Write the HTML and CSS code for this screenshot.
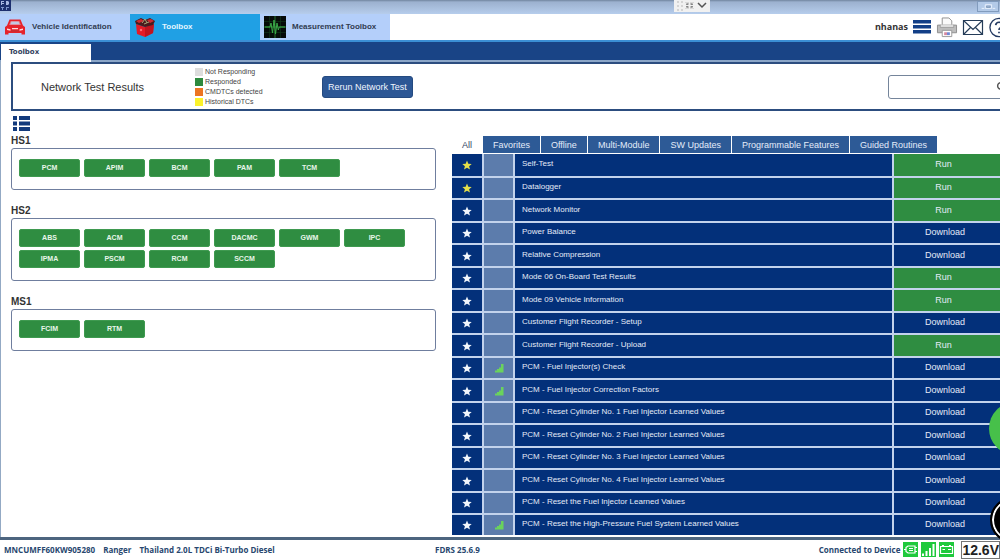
FILE: index.html
```html
<!DOCTYPE html>
<html lang="en">
<head>
<meta charset="utf-8">
<title>FDRS Toolbox</title>
<link rel="stylesheet" href="styles.css">
</head>
<body>
<svg class="defs" aria-hidden="true">
  <symbol id="star" viewBox="0 0 10 10"><path d="M5 .6 6.300 3.800 9.700 4 7.100 6.200 8 9.500 5 7.700 2 9.500 2.900 6.200.3 4l3.400-.2z"/></symbol>
  <symbol id="signal" viewBox="0 0 10 10"><path d="M1 7.500h2V6h2V4.500h2V1h2.500v8.500H1z"/></symbol>
</svg>
<div class="app">
  <div class="titlebar">
    <svg class="app-icon" viewBox="0 0 11 11" aria-hidden="true"><rect width="11" height="11" fill="#1d2f6e"/><path d="M1 1h3v1H2v1h2v1H2v1H1zM6 1h2l1 1v2L8 5H6z" fill="#a9b8e2"/><path d="M1 7h3v1H3v2H2V8H1zM6 7h3v1H7v2H6z" fill="#7d93cd"/></svg>
    <div class="dock">
      <svg viewBox="0 0 36 12" aria-hidden="true"><path d="M3 1h2v2H3zM7 1h2v2H7zM3 5h2v2H3zM7 5h2v2H7zM3 9h2v2H3zM7 9h2v2H7z" fill="#d4d4d4"/><path d="M12 2.500l2 2m0-2v2h-2M19 2.500l-2 2m0-2v2h2M12 8.500l2-2m0 2v-2h-2M19 8.500l-2-2m0 2v-2h2" fill="none" stroke="#777" stroke-width=".8"/><path d="M24 3l4 4 4-4" fill="none" stroke="#555" stroke-width="1.500"/></svg>
    </div>
    <button class="window-button" aria-label="Restore"><svg viewBox="0 0 22 10" aria-hidden="true"><path d="M8 3h7v4H8zM4 7h3M16 7h3" fill="none" stroke="#eef5ff"/><path d="M9.500 4.500h4v1.500h-4z" fill="none" stroke="#6e87a8" stroke-width=".7"/></svg></button>
  </div>

  <header class="topbar">
    <nav class="main-nav">
      <a href="#vehicle">
        <svg viewBox="0 0 22 22" aria-hidden="true"><path d="M5.500 3.500h11l2.500 6 2 1.500v7.500h-3.500V17h-13v1.500H1V11l2-1.500z" fill="#e6232c"/><path d="M6.700 5h8.600l1.500 4H5.200z" fill="#e3808e"/><path d="M7.500 5.800h7l1 2.500h-9z" fill="#c2c8e2"/><path d="M3 12.500l3.500.8v1.500L3 14zM19 12.500l-3.500.8v1.500L19 14zM8 12h6v1.300H8z" fill="#ffd8dc"/><path d="M7 15h8" stroke="#b5323a"/></svg>
        Vehicle Identification</a>
      <a href="#toolbox" class="active" aria-current="page">
        <svg viewBox="0 0 22 22" aria-hidden="true"><path d="M2 8l9 3 9-3-1 9-8 4-8-3z" fill="#e31b27"/><path d="M11 11l9-3-1 9-8 4z" fill="#c1141f"/><path d="M1 5l6-3 4 2 5-2 5 3-2 4-8 2-9-3z" fill="#491b1d"/><path d="M2 5l5-2 3 2-5 2zM13 4l4-1 3 2-4 2z" fill="#cf2a30"/><path d="M8 7l3-4 2 4m-3 1l5-2" stroke="#a8a477" fill="none"/><circle cx="7" cy="14" r="1.200" fill="#ff7078"/></svg>
        Toolbox</a>
      <a href="#measurement">
        <svg viewBox="0 0 22 22" aria-hidden="true"><rect width="22" height="22" fill="#060b08"/><path d="M0 5.500h22M0 16.500h22M5.500 0v22M16.500 0v22" stroke="#123b1b" stroke-width=".6"/><path d="M0 11h22M11 0v22" stroke="#2c8a3a" stroke-width=".8"/><path d="M1 11h5l1-4 1.500 10L10 4l1.500 14L13 7l1.300 7 1-3H21" fill="none" stroke="#3aa847" stroke-width="1"/></svg>
        Measurement Toolbox</a>
    </nav>
    <div class="user-tools">
      <span class="user">nhanas</span>
      <button aria-label="Menu"><svg viewBox="0 0 20 16" aria-hidden="true"><path d="M1 1h18v3.500H1zM1 6h18v3.500H1zM1 11h18v3.500H1z" fill="#123f87"/></svg></button>
      <button aria-label="Print"><svg viewBox="0 0 22 22" aria-hidden="true"><path d="M6 9V1h7l3 3v5" fill="#fafafa" stroke="#909090"/><path d="M1 8.500h20v8H1z" fill="#bdbdbd" stroke="#8e8e8e"/><path d="M4 8v3h14V8" fill="#ddd" stroke="#919191" stroke-width=".7"/><path d="M6 14h10v6.500H6z" fill="#fff" stroke="#999"/><path d="M8 16h3v3H8z" fill="#d68aa0"/><path d="M11 16h3v3h-3z" fill="#6f88d4"/></svg></button>
      <button aria-label="Messages"><svg viewBox="0 0 22 16" aria-hidden="true"><path d="M1.500 1h19v14h-19zM1.500 1l9.500 9 9.500-9M1.500 15l7-7M20.500 15l-7-7" fill="#fff" fill-opacity=".2" stroke="#253c58" stroke-width="1.200"/></svg></button>
      <button aria-label="Help"><svg viewBox="0 0 22 22" aria-hidden="true"><circle cx="11" cy="11" r="9.500" fill="#fff" stroke="#243a62" stroke-width="1.400"/><path d="M7.500 8.500Q8 5.500 11 5.500t3.500 3q0 1.500-2 2.700-1.500.8-1.500 2.300M11 15.500v1.500" fill="none" stroke="#243a62" stroke-width="1.800"/></svg></button>
    </div>
  </header>

  <div class="subbar"><a href="#toolbox" class="subtab">Toolbox</a></div>

  <main class="workspace">
    <section class="results-head">
      <h1>Network Test Results</h1>
      <ul class="legend">
        <li class="none">Not Responding</li>
        <li class="ok">Responded</li>
        <li class="cmdtc">CMDTCs detected</li>
        <li class="history">Historical DTCs</li>
      </ul>
      <button class="rerun">Rerun Network Test</button>
      <div class="search"><input type="search" aria-label="Search"><svg viewBox="0 0 10 10" aria-hidden="true"><path d="M7 7l2.500 2.500M7.500 4.500a3 3 0 1 1-6 0 3 3 0 0 1 6 0z" fill="none" stroke="#555" stroke-width="1.300"/></svg></div>
    </section>

    <div class="columns">
      <div class="networks">
        <button class="list-toggle" aria-label="List view"><svg viewBox="0 0 17 15" aria-hidden="true"><path d="M0 0h4v4H0zM6 0h11v4H6zM0 5.500h4v4H0zM6 5.500h11v4H6zM0 11h4v4H0zM6 11h11v4H6z" fill="#123a7c"/></svg></button>
        <section>
          <h2>HS1</h2>
          <div class="modules"><button>PCM</button><button>APIM</button><button>BCM</button><button>PAM</button><button>TCM</button></div>
        </section>
        <section>
          <h2>HS2</h2>
          <div class="modules"><button>ABS</button><button>ACM</button><button>CCM</button><button>DACMC</button><button>GWM</button><button>IPC</button><button>IPMA</button><button>PSCM</button><button>RCM</button><button>SCCM</button></div>
        </section>
        <section>
          <h2>MS1</h2>
          <div class="modules"><button>FCIM</button><button>RTM</button></div>
        </section>
      </div>

      <section class="tools">
        <div class="filters" role="tablist">
          <button role="tab" aria-selected="true">All</button>
          <button role="tab">Favorites</button>
          <button role="tab">Offline</button>
          <button role="tab">Multi-Module</button>
          <button role="tab">SW Updates</button>
          <button role="tab">Programmable Features</button>
          <button role="tab">Guided Routines</button>
        </div>
        <table>
          <colgroup><col class="col-star"><col class="col-signal"><col><col class="col-action"></colgroup>
          <tbody>
          <tr class="fav"><td><svg><use href="#star"/></svg></td><td></td><td>Self-Test</td><td class="run"><button>Run</button></td></tr>
          <tr class="fav"><td><svg><use href="#star"/></svg></td><td></td><td>Datalogger</td><td class="run"><button>Run</button></td></tr>
          <tr><td><svg><use href="#star"/></svg></td><td></td><td>Network Monitor</td><td class="run"><button>Run</button></td></tr>
          <tr><td><svg><use href="#star"/></svg></td><td></td><td>Power Balance</td><td><button>Download</button></td></tr>
          <tr><td><svg><use href="#star"/></svg></td><td></td><td>Relative Compression</td><td><button>Download</button></td></tr>
          <tr><td><svg><use href="#star"/></svg></td><td></td><td>Mode 06 On-Board Test Results</td><td class="run"><button>Run</button></td></tr>
          <tr><td><svg><use href="#star"/></svg></td><td></td><td>Mode 09 Vehicle Information</td><td class="run"><button>Run</button></td></tr>
          <tr><td><svg><use href="#star"/></svg></td><td></td><td>Customer Flight Recorder - Setup</td><td><button>Download</button></td></tr>
          <tr><td><svg><use href="#star"/></svg></td><td></td><td>Customer Flight Recorder - Upload</td><td class="run"><button>Run</button></td></tr>
          <tr><td><svg><use href="#star"/></svg></td><td><svg><use href="#signal"/></svg></td><td>PCM - Fuel Injector(s) Check</td><td><button>Download</button></td></tr>
          <tr><td><svg><use href="#star"/></svg></td><td><svg><use href="#signal"/></svg></td><td>PCM - Fuel Injector Correction Factors</td><td><button>Download</button></td></tr>
          <tr><td><svg><use href="#star"/></svg></td><td></td><td>PCM - Reset Cylinder No. 1 Fuel Injector Learned Values</td><td><button>Download</button></td></tr>
          <tr><td><svg><use href="#star"/></svg></td><td></td><td>PCM - Reset Cylinder No. 2 Fuel Injector Learned Values</td><td><button>Download</button></td></tr>
          <tr><td><svg><use href="#star"/></svg></td><td></td><td>PCM - Reset Cylinder No. 3 Fuel Injector Learned Values</td><td><button>Download</button></td></tr>
          <tr><td><svg><use href="#star"/></svg></td><td></td><td>PCM - Reset Cylinder No. 4 Fuel Injector Learned Values</td><td><button>Download</button></td></tr>
          <tr><td><svg><use href="#star"/></svg></td><td></td><td>PCM - Reset the Fuel Injector Learned Values</td><td><button>Download</button></td></tr>
          <tr><td><svg><use href="#star"/></svg></td><td><svg><use href="#signal"/></svg></td><td>PCM - Reset the High-Pressure Fuel System Learned Values</td><td><button>Download</button></td></tr>
          </tbody>
        </table>
      </section>
    </div>
  </main>

  <footer class="statusbar">
    <div class="vehicle"><span>MNCUMFF60KW905280</span><span>Ranger</span><span>Thailand 2.0L TDCi Bi-Turbo Diesel</span></div>
    <span class="version">FDRS 25.6.9</span>
    <div class="connection">
      <span>Connected to Device</span>
      <svg viewBox="0 0 15 15" aria-hidden="true"><rect width="15" height="15" fill="#1fc93c"/><path d="M1 7.500h2M3 5.500L5 4h7v7H5L3 9.500zM12 5.500h2M12 9.500h2" fill="none" stroke="#fff" stroke-width="1.200"/><path d="M6 6.500h4M6 8.500h4" stroke="#fff"/></svg>
      <svg viewBox="0 0 15 15" aria-hidden="true"><rect width="15" height="15" fill="#1fc93c"/><path d="M1 11.500h2V14H1zM4.500 9h2v5h-2zM8 6h2v8H8zM11.500 2h2v12h-2z" fill="#fff"/></svg>
      <svg viewBox="0 0 15 15" aria-hidden="true"><rect width="15" height="15" fill="#1fc93c"/><path d="M1.500 4.500h12v7h-12zM3 3.500h2M10 3.500h2M3.500 7.500h2.500M9 7.500h3" fill="none" stroke="#fff" stroke-width="1.200"/></svg>
      <strong>12.6V</strong>
    </div>
  </footer>
  <button class="bubble green" aria-label="Assistant"></button>
  <button class="bubble black" aria-label="Recorder"></button>
</div>
</body>
</html>
```
FILE: styles.css
```css
* { box-sizing: border-box; }
body { margin: 0; background: #fff; color: #333; font: 9px/12px "Liberation Sans", Arial, sans-serif; }
button { font: inherit; color: inherit; margin: 0; padding: 0; border: 0; background: none; cursor: pointer; }
a { color: inherit; text-decoration: none; }
h1, h2, ul { margin: 0; padding: 0; }
svg { display: block; flex: none; }
.defs { display: none; }
.app { position: relative; display: flex; flex-direction: column; height: 100vh; overflow: hidden; }

.titlebar { position: relative; display: flex; flex: none; justify-content: space-between; height: 14px; background: linear-gradient(#71859f, #9cb1cf 2px, #b6cdec); }
.app-icon { width: 11px; height: 11px; }
.dock { position: absolute; left: 67.4%; top: 0; width: 36px; height: 12px; background: #f1f1f1; }
.window-button { width: 22px; height: 11px; margin: 1px 1px 0; border: 1px solid #819bbd; background: #b3cae8; }

.topbar { display: flex; flex: none; justify-content: space-between; height: 28px; border-bottom: 2px solid #3b8fd5; }
.main-nav { display: flex; width: 39%; background: #b4cffa; font: bold 8px/12px "Liberation Sans", Arial, sans-serif; color: #303b50; }
.main-nav a { display: flex; flex: 1; align-items: center; gap: 6px; padding-left: 4px; white-space: nowrap; }
.main-nav svg { width: 22px; height: 22px; }
.main-nav .active { background: #20a0e4; color: #e4f6ff; }
.user-tools { display: flex; align-items: center; gap: 4px; margin-right: -10px; }
.user { font: bold 9px/12px "Open Sans", sans-serif; }
.user-tools svg { width: 22px; height: 21px; }
.user-tools button:first-of-type svg { width: 20px; height: 16px; }

.subbar { display: flex; flex: none; height: 20px; padding: 2px 1px 0; background: #194486; border-bottom: 2px solid #8ba6c8; }
.subtab { display: block; width: 90px; height: 18px; padding: 2px 8px; background: #fff; font: bold 7px/12px "DejaVu Sans", sans-serif; color: #31415d; z-index: 1; }

.workspace { flex: 1; min-height: 0; overflow: hidden; border-left: 1px solid #93a9c4; padding-left: 10px; padding-bottom: 2px; display: flex; flex-direction: column; }
.results-head { display: grid; grid-template-columns: 154px 127px 1fr 150px; align-items: center; flex: none; height: 49px; margin-right: -40px; padding-left: 28px; border: 2px solid #2c4d7f; }
.results-head h1 { font-size: 11px; font-weight: normal; line-height: 14px; }
.legend { list-style: none; font-size: 7px; line-height: 10px; color: #444; }
.legend li { display: flex; align-items: center; gap: 2px; }
.legend li::before { content: ""; width: 8px; height: 8px; background: #ddd; }
.legend .ok::before { background: #2d8a3e; }
.legend .cmdtc::before { background: #ec7523; }
.legend .history::before { background: #fbf22c; }
.rerun { justify-self: start; padding: 4px 5px; border: 1px solid #244a80; border-radius: 3px; background: #2c5795; color: #f1f6ff; }
.search { position: relative; }
.search input { display: block; width: 100%; height: 24px; border: 1px solid #75859b; border-radius: 3px; background: #fff; font: inherit; }
.search svg { position: absolute; left: 108px; top: 6px; width: 11px; height: 11px; }

.columns { display: grid; grid-template-columns: 425fr 548fr; gap: 16px; flex: 1; min-height: 0; }
.networks { padding-top: 5px; }
.list-toggle { display: block; margin: 0 0 3px 2px; }
.list-toggle svg { width: 17px; height: 15px; }
.networks h2 { font-size: 10px; line-height: 14px; }
.modules { display: flex; flex-wrap: wrap; gap: 3px 4px; margin-bottom: 14px; padding: 10px 7px 12px; border: 1px solid #6f7e9e; border-radius: 3px; }
.modules button { width: 61px; height: 18px; border: 1px solid #3f9a50; border-radius: 2px; background: #2f8d41; color: #e8f6ea; font-size: 7px; font-weight: bold; line-height: 12px; }

.tools { min-width: 0; padding-top: 25px; }
.filters { display: flex; gap: 1px; margin-bottom: 1px; }
.filters button { height: 17px; padding: 0 10px; background: #2d5a96; color: #e4edfa; white-space: nowrap; }
.filters [aria-selected] { background: #fff; color: #33465f; }
table { width: 100%; border-collapse: collapse; table-layout: fixed; color: #e3ebf8; }
.col-star { width: 31px; }
.col-signal { width: 31px; }
.col-action { width: 107px; }
td { height: 22px; padding: 0 0 2px; background: #03307a; border-bottom: 2px solid #c3d3ec; border-right: 2px solid #c3d3ec; }
tr:nth-child(odd) td { height: 23px; }
tr:last-child td { height: 21px; border-bottom: 0; }
td:nth-child(1), td:nth-child(2) { padding-bottom: 0; }
td:nth-child(2) { background: #5c7cac; }
td:nth-child(3) { padding-left: 7px; font-size: 8px; }
td:last-child { padding-right: 4px; border-right: 0; }
td.run { padding-right: 7px; background: #2f8d41; }
td button { display: block; width: 100%; }
td svg { width: 10px; height: 10px; margin: 0 auto; fill: #f2f6fc; }
.fav svg { fill: #e6df49; }
td:nth-child(2) svg { fill: #6ad35c; }

.statusbar { display: grid; grid-template-columns: 43.5% auto 1fr; flex: none; align-items: center; height: 22px; border-top: 3px solid #4d657f; background: #fff; color: #28476f; font: bold 8px/12px "Open Sans", sans-serif; }
.vehicle { display: flex; gap: 8px; padding-left: 4px; white-space: nowrap; }
.connection { display: flex; justify-content: flex-end; align-items: center; gap: 3px; }
.connection svg { width: 15px; height: 15px; }
.connection strong { margin-left: 4px; border: 1px solid #777; color: #222; font: bold 14px/16px "Liberation Sans", Arial, sans-serif; }

.bubble { position: absolute; border-radius: 50%; }
.green { right: -42px; bottom: 104px; width: 53px; height: 53px; background: #47c04a; }
.black { right: -36px; bottom: 16px; width: 46px; height: 46px; border: 2px solid #000; background: #000; box-shadow: inset 0 0 0 2px #fff; }
```
